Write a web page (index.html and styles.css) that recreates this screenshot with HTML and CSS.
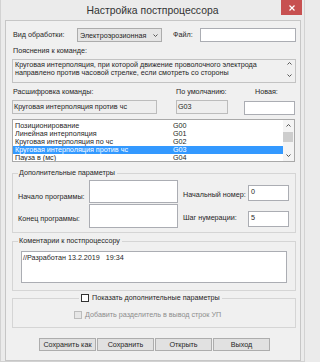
FILE: index.html
```html
<!DOCTYPE html>
<html lang="ru">
<head>
<meta charset="utf-8">
<title>Настройка постпроцессора</title>
<link rel="stylesheet" href="styles.css">
</head>
<body>
<div class="window">
  <div class="titlebar">
    <span class="title">Настройка постпроцессора</span>
    <span class="close"><svg width="6" height="6" viewBox="0 0 6 6"><path d="M0.5 0.5 L5.5 5.5 M5.5 0.5 L0.5 5.5" stroke="#fff" stroke-width="1.2" fill="none"/></svg></span>
  </div>
  <div class="client">
    <div class="row-type">
      <span class="lbl lbl-type">Вид обработки:</span>
      <div class="combo"><span>Электроэрозионная</span><svg class="chev" width="5" height="3" viewBox="0 0 5 3"><polyline points="0.5,0.5 2.5,2.5 4.5,0.5" stroke="#555" stroke-width="1" fill="none"/></svg></div>
      <span class="lbl lbl-file">Файл:</span>
      <div class="input file-input"></div>
    </div>
    <div class="lbl lbl-expl">Пояснения к команде:</div>
    <div class="expl">
      <div class="expl-text">Круговая интерполяция, при которой движение проволочного электрода<br>направлено против часовой стрелке, если смотреть со стороны</div>
      <div class="expl-scroll">
        <svg width="5" height="3" viewBox="0 0 5 3"><polyline points="0.5,2.5 2.5,0.5 4.5,2.5" stroke="#555" stroke-width="1" fill="none"/></svg>
        <svg width="5" height="3" viewBox="0 0 5 3"><polyline points="0.5,0.5 2.5,2.5 4.5,0.5" stroke="#555" stroke-width="1" fill="none"/></svg>
      </div>
    </div>
    <div class="cmd-grid">
      <span class="lbl lbl-dec">Расшифровка команды:</span>
      <span class="lbl">По умолчанию:</span>
      <span class="lbl lbl-new">Новая:</span>
      <div class="ro ro-name">Круговая интерполяция против чс</div>
      <div class="ro ro-code">G03</div>
      <div class="input new-input"></div>
    </div>
    <div class="list">
      <div class="list-items">
        <div class="item"><span class="name">Позиционирование</span><span>G00</span></div>
        <div class="item"><span class="name">Линейная интерполяция</span><span>G01</span></div>
        <div class="item"><span class="name">Круговая интерполяция по чс</span><span>G02</span></div>
        <div class="item sel"><span class="name">Круговая интерполяция против чс</span><span>G03</span></div>
        <div class="item"><span class="name">Пауза в (мс)</span><span>G04</span></div>
      </div>
      <div class="vscroll">
        <div class="sb-btn"><svg width="5" height="3" viewBox="0 0 5 3"><polyline points="0.5,2.5 2.5,0.5 4.5,2.5" stroke="#555" stroke-width="1" fill="none"/></svg></div>
        <div class="thumb"></div>
        <div class="sb-btn sb-down"><svg width="5" height="3" viewBox="0 0 5 3"><polyline points="0.5,0.5 2.5,2.5 4.5,0.5" stroke="#555" stroke-width="1" fill="none"/></svg></div>
      </div>
    </div>
    <fieldset class="group group-params">
      <legend>Дополнительные параметры</legend>
      <div class="params-grid">
        <span class="lbl p-l1">Начало программы:</span>
        <div class="input ta ta1"></div>
        <span class="lbl p-r1">Начальный номер:</span>
        <div class="input num num1">0</div>
        <span class="lbl p-l2">Конец программы:</span>
        <div class="input ta ta2"></div>
        <span class="lbl p-r2">Шаг нумерации:</span>
        <div class="input num num2">5</div>
      </div>
    </fieldset>
    <fieldset class="group group-comment">
      <legend>Коментарии к постпроцессору</legend>
      <div class="input comment">//Разработан 13.2.2019   19:34</div>
    </fieldset>
    <fieldset class="group group-extra">
      <legend><span class="check"></span><span>Показать дополнительные параметры</span></legend>
      <div class="extra-row"><span class="check check-disabled"></span><span>Добавить разделитель в вывод строк УП</span></div>
    </fieldset>
    <div class="buttons">
      <div class="btn">Сохранить как</div>
      <div class="btn">Сохранить</div>
      <div class="btn">Открыть</div>
      <div class="btn">Выход</div>
    </div>
  </div>
</div>
</body>
</html>
```
FILE: styles.css
```css
html {
  background: #ebebeb;
}
html, body {
  margin: 0;
  padding: 0;
}
body {
  width: 305px;
  height: 362px;
  overflow: hidden;
  background: #ebebeb;
  font-family: "Liberation Sans", Arial, sans-serif;
  font-size: 7.2px;
  color: #262626;
}
.window {
  width: 305px;
  height: 362px;
  box-sizing: border-box;
  background: #ebebeb;
  border-left: 1px solid #d2d2d2;
  border-right: 1px solid #d2d2d2;
  border-bottom: 1px solid #d2d2d2;
}
.titlebar {
  display: grid;
  grid-template-columns: 1fr auto 1fr;
  height: 20px;
  align-items: start;
}
.title {
  grid-column: 2;
  font-size: 10.4px;
  line-height: 22px;
  color: #333;
  white-space: nowrap;
}
.close {
  grid-column: 3;
  justify-self: end;
  margin-right: 2px;
  width: 21px;
  height: 15px;
  background: #c75050;
  display: flex;
  align-items: center;
  justify-content: center;
}
.client {
  margin-left: 4px;
  width: 296px;
  height: 341px;
  box-sizing: border-box;
  border: 1px solid #c6c6c6;
  background: #f0f0f0;
  padding: 0 4px 0 6px;
}
.lbl {
  white-space: nowrap;
  line-height: 10px;
}
.input {
  background: #fff;
  border: 1px solid #abadb3;
  box-sizing: border-box;
}
.row-type {
  margin-top: 7px;
  height: 14px;
  display: flex;
  align-items: center;
}
.lbl-type {
  width: 64px;
  padding-left: 1px;
  flex-shrink: 0;
}
.combo {
  width: 85px;
  height: 14px;
  box-sizing: border-box;
  border: 1px solid #acacac;
  background: #e5e5e5;
  display: flex;
  align-items: center;
  justify-content: space-between;
  padding: 0 3px 0 2px;
  white-space: nowrap;
  flex-shrink: 0;
}
.lbl-file {
  margin-left: 11px;
  width: 27px;
  flex-shrink: 0;
}
.file-input {
  flex: 1;
  height: 14px;
}
.lbl-expl {
  margin-top: 4px;
  padding-left: 1px;
}
.expl {
  margin-top: 3px;
  height: 24px;
  box-sizing: border-box;
  border: 1px solid #c3c3c3;
  background: #f0f0f0;
  display: flex;
}
.expl-text {
  flex: 1;
  padding: 1px 0 0 2px;
  line-height: 8.3px;
  white-space: nowrap;
  overflow: hidden;
}
.expl-scroll {
  width: 11px;
  display: flex;
  flex-direction: column;
  justify-content: space-between;
  align-items: center;
  padding: 2px 0 5px;
}
.cmd-grid {
  margin-top: 4px;
  display: grid;
  grid-template-columns: 164px 68px 52px;
  grid-template-rows: 10px 14px;
  row-gap: 3px;
}
.lbl-dec {
  padding-left: 1px;
}
.lbl-new {
  margin-left: 11px;
}
.ro {
  height: 14px;
  box-sizing: border-box;
  border: 1px solid #bcbcbc;
  background: #eeeeee;
  padding-left: 1px;
  line-height: 12px;
  white-space: nowrap;
}
.ro-name {
  width: 145px;
}
.ro-code {
  width: 52px;
}
.new-input {
  width: 51px;
  height: 14px;
  margin-top: 1px;
}
.list {
  margin-top: 5px;
  width: 283px;
  height: 43px;
  box-sizing: border-box;
  border: 1px solid #a9a9a9;
  background: #fff;
  display: flex;
}
.list-items {
  width: 270px;
  padding-top: 2px;
  overflow: hidden;
}
.item {
  display: flex;
  height: 8px;
  line-height: 8px;
  padding-left: 2px;
  white-space: nowrap;
}
.item .name {
  width: 158px;
}
.item.sel {
  background: #3399ff;
  color: #fff;
}
.vscroll {
  width: 11px;
  display: flex;
  flex-direction: column;
  background: #f4f4f4;
}
.sb-btn {
  height: 11px;
  display: flex;
  align-items: center;
  justify-content: center;
}
.sb-down {
  margin-top: auto;
}
.thumb {
  margin-top: 1px;
  width: 10px;
  height: 10px;
  background: #cdcdcd;
}
.group {
  margin: 0;
  border: 1px solid #d5d5d5;
  min-width: 0;
}
.group legend {
  padding: 0 2px 0 1px;
  line-height: 10px;
  white-space: nowrap;
}
.group-params {
  margin-top: 6px;
  padding: 2px 0 4px 5px;
}
.params-grid {
  display: grid;
  grid-template-columns: 71px 89px 70px 41px;
  grid-template-rows: 23px 24px;
  row-gap: 1px;
  align-items: start;
}
.p-l1 { margin-top: 12px; }
.p-l2 { margin-top: 10px; }
.p-r1 { margin-top: 10px; padding-left: 5px; }
.p-r2 { margin-top: 9px; padding-left: 5px; }
.ta1 { height: 23px; }
.ta2 { height: 24px; }
.num {
  height: 16px;
  padding: 2px 0 0 2px;
  line-height: 8px;
}
.num1 { margin-top: 5px; }
.num2 { margin-top: 7px; }
.group-comment {
  margin-top: 3px;
  padding: 5px 0 7px 5px;
}
.comment {
  margin-left: 3px;
  width: 266px;
  height: 32px;
  padding: 2px 0 0 1px;
  line-height: 8px;
  white-space: pre;
}
.group-extra {
  margin-top: 2px;
  padding: 7px 0 8px 0;
}
.group-extra legend {
  margin-left: 66px;
  padding: 0 2px;
  display: flex;
  align-items: center;
  gap: 3px;
  height: 10px;
}
.check {
  display: inline-block;
  width: 8px;
  height: 8px;
  box-sizing: border-box;
  border: 1px solid #333;
  background: #fff;
  flex-shrink: 0;
}
.check-disabled {
  border-color: #bcbcbc;
  background: #e6e6e6;
}
.extra-row {
  padding-left: 61px;
  height: 9px;
  display: flex;
  align-items: center;
  gap: 3px;
  color: #8d8d8d;
  white-space: nowrap;
}
.buttons {
  margin-top: 10px;
  padding-left: 27px;
  display: flex;
  gap: 1px;
}
.btn {
  width: 57px;
  height: 13px;
  box-sizing: border-box;
  border: 1px solid #adadad;
  background: #e1e1e1;
  display: flex;
  align-items: center;
  justify-content: center;
  white-space: nowrap;
}
```
